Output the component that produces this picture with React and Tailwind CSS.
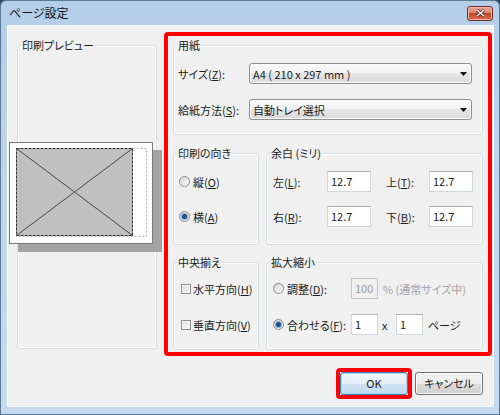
import React from "react";

function Radio({ checked }) {
  return (
    <span className="w-[11px] h-[11px] shrink-0 rounded-full border border-[#8a8a8a] bg-linear-to-br from-[#d6d6d6] to-[#fbfbfb] flex items-center justify-center">
      {checked && (
        <span className="w-[5px] h-[5px] rounded-full bg-[#23508c] shadow-[0_0_0_1px_#8fb0d6]" />
      )}
    </span>
  );
}

function Check() {
  return (
    <span className="w-[10px] h-[10px] shrink-0 border border-[#8e8f8f] bg-linear-to-br from-[#dcdcdc] to-[#f8f8f8] shadow-[inset_0_0_0_1px_#f4f4f4]" />
  );
}

function Group({ label, className, children }) {
  return (
    <div
      className={
        "relative border border-[#d5dfe5] rounded-[3px] shadow-[inset_0_0_0_1px_#ffffff] " +
        className
      }
    >
      <span className="absolute left-[3px] -top-[8px] px-[1px] leading-[14px] bg-[#f0f0f0] text-[#1b1b1b]">
        {label}
      </span>
      {children}
    </div>
  );
}

function Select({ children }) {
  return (
    <div className="flex items-center justify-between w-[223px] h-[21px] border border-[#8e8f8f] rounded-[3px] bg-[linear-gradient(#fbfbfb,#f1f1f1_50%,#e6e6e6_50%,#dadada)] pl-[3px] pr-[4px] shadow-[inset_0_0_0_1px_#fcfcfc]">
      <span className="leading-[14px]">{children}</span>
      <svg width="7" height="4" viewBox="0 0 7 4">
        <path d="M0 0H7L3.5 4Z" fill="#111" />
      </svg>
    </div>
  );
}

function Field({ w, value, disabled }) {
  return (
    <div
      className={
        "h-[21px] shrink-0 border flex items-center pl-[3px] pb-[2px] " +
        w +
        (disabled
          ? " bg-[#f0f0f0] border-[#c4c4c4] text-[#9a9a9a]"
          : " bg-white border-[#d3d6db] border-t-[#abadb3] text-[#1b1b1b]")
      }
    >
      {value}
    </div>
  );
}

export default function App() {
  return (
    <div className="w-[500px] h-[415px] overflow-hidden bg-[#2c4a63] font-['Noto_Sans_CJK_JP',sans-serif] [font-feature-settings:'palt'] text-[11px] leading-[14px] text-[#1b1b1b]">
      <div className="w-[500px] h-[415px] flex flex-col rounded-t-[6px] border border-[#5d7a98] bg-linear-to-b from-[#b4cde9] via-[#c1d6ee] to-[#c6daef]">
        {/* title bar */}
        <div className="h-[24px] shrink-0 flex items-center justify-between pl-[8px] pr-[6px]">
          <span className="text-[12px] leading-[16px] text-[#111]">ページ設定</span>
          <div className="w-[26px] h-[15px] rounded-[3px] border border-[#6e3023] bg-[linear-gradient(#eba898,#dc7f6b_50%,#c4472f_50%,#d2694f)] flex items-center justify-center shadow-[inset_0_0_0_1px_#f0b8a8]">
            <svg width="9" height="8" viewBox="0 0 9 8">
              <path d="M1 1L8 7M8 1L1 7" stroke="#5a2218" strokeWidth="3" />
              <path d="M1 1L8 7M8 1L1 7" stroke="#ffffff" strokeWidth="1.6" />
            </svg>
          </div>
        </div>

        {/* client area */}
        <div className="ml-[6px] mr-[5px] h-[382px] shrink-0 bg-[#f0f0f0] shadow-[inset_0_0_0_1px_#fafcff] flex flex-col">
          <div className="flex items-start pt-[7px] pl-[10px]">
            {/* preview */}
            <Group label="印刷プレビュー" className="mt-[13px] w-[140px] h-[304px] shrink-0">
              <svg
                className="absolute left-[-9px] top-[96px]"
                width="154"
                height="111"
                viewBox="0 0 154 111"
              >
                <rect x="9" y="8" width="144" height="102" fill="#a3a3a3" />
                <rect x="0.5" y="0.5" width="143" height="101" fill="#ffffff" stroke="#7a7a7a" />
                <rect
                  x="7.5"
                  y="6.5"
                  width="130"
                  height="88"
                  fill="none"
                  stroke="#b5b5b5"
                  strokeDasharray="2 2"
                />
                <rect
                  x="7.5"
                  y="6.5"
                  width="116"
                  height="87"
                  fill="#c0c0c0"
                  stroke="#333333"
                  strokeDasharray="3 1"
                />
                <line x1="7.5" y1="6.5" x2="123.5" y2="93.5" stroke="#4a4a4a" />
                <line x1="123.5" y1="6.5" x2="7.5" y2="93.5" stroke="#4a4a4a" />
              </svg>
            </Group>

            {/* red highlighted settings */}
            <div className="ml-[7px] w-[328px] h-[324px] shrink-0 border-4 border-[#ff0000] rounded-[4px] px-[5px] flex flex-col">
              <Group label="用紙" className="mt-[9px] h-[90px] shrink-0">
                <div className="flex flex-col gap-[15px] pt-[17px] pl-[4px]">
                  <div className="flex items-center h-[21px]">
                    <span className="w-[71px]">
                      サイズ(<u>Z</u>):
                    </span>
                    <Select>A4 ( 210 x 297 mm )</Select>
                  </div>
                  <div className="flex items-center h-[21px]">
                    <span className="w-[71px]">
                      給紙方法(<u>S</u>):
                    </span>
                    <Select>自動トレイ選択</Select>
                  </div>
                </div>
              </Group>

              <div className="mt-[18px] h-[92px] shrink-0 flex gap-[7px]">
                <Group label="印刷の向き" className="w-[86px] h-[92px] shrink-0">
                  <div className="flex flex-col gap-[14px] pt-[17px] pl-[5px]">
                    <div className="flex items-center gap-[3px] h-[21px]">
                      <Radio />
                      <span>
                        縦(<u>O</u>)
                      </span>
                    </div>
                    <div className="flex items-center gap-[3px] h-[21px]">
                      <Radio checked />
                      <span>
                        横(<u>A</u>)
                      </span>
                    </div>
                  </div>
                </Group>
                <Group label="余白 (ミリ)" className="w-[217px] h-[92px] shrink-0">
                  <div className="grid grid-cols-[54px_44px_15px_43px_44px] gap-y-[14px] items-center pt-[17px] pl-[6px]">
                    <span>
                      左(<u>L</u>):
                    </span>
                    <Field w="w-[44px]" value="12.7" />
                    <span />
                    <span>
                      上(<u>T</u>):
                    </span>
                    <Field w="w-[44px]" value="12.7" />
                    <span>
                      右(<u>R</u>):
                    </span>
                    <Field w="w-[44px]" value="12.7" />
                    <span />
                    <span>
                      下(<u>B</u>):
                    </span>
                    <Field w="w-[44px]" value="12.7" />
                  </div>
                </Group>
              </div>

              <div className="mt-[17px] h-[88px] shrink-0 flex gap-[7px]">
                <Group label="中央揃え" className="w-[86px] h-[88px] shrink-0">
                  <div className="flex flex-col gap-[15px] pt-[15px] pl-[7px]">
                    <div className="flex items-center gap-[2px] h-[21px]">
                      <Check />
                      <span>
                        水平方向(<u>H</u>)
                      </span>
                    </div>
                    <div className="flex items-center gap-[2px] h-[21px]">
                      <Check />
                      <span>
                        垂直方向(<u>V</u>)
                      </span>
                    </div>
                  </div>
                </Group>
                <Group label="拡大縮小" className="w-[217px] h-[88px] shrink-0">
                  <div className="flex flex-col gap-[15px] pt-[15px] pl-[6px]">
                    <div className="flex items-center h-[21px]">
                      <div className="w-[78px] flex items-center gap-[3px]">
                        <Radio />
                        <span>
                          調整(<u>D</u>):
                        </span>
                      </div>
                      <Field w="w-[27px]" value="100" disabled />
                      <span className="ml-[5px] text-[#a3a3a3]">% (通常サイズ中)</span>
                    </div>
                    <div className="flex items-center h-[21px]">
                      <div className="w-[78px] flex items-center gap-[3px]">
                        <Radio checked />
                        <span className="whitespace-nowrap">
                          合わせる(<u>F</u>):
                        </span>
                      </div>
                      <Field w="w-[27px]" value="1" />
                      <span className="w-[18px] pl-[4px]">x</span>
                      <Field w="w-[27px]" value="1" />
                      <span className="ml-[5px]">ページ</span>
                    </div>
                  </div>
                </Group>
              </div>
            </div>
          </div>

          {/* buttons */}
          <div className="mt-[11px] h-[32px] flex items-center justify-end pr-[11px]">
            <div className="border-4 border-[#ff0000] rounded-[4px]">
              <div className="w-[68px] h-[23px] rounded-[3px] border border-[#3c7fb1] bg-[linear-gradient(#eef6fc,#e2eef8_50%,#cfe3f3_50%,#c2dbf0)] shadow-[inset_0_0_0_1px_#a9d6f3] flex items-center justify-center">
                OK
              </div>
            </div>
            <div className="ml-[3px] w-[68px] h-[23px] rounded-[3px] border border-[#707070] bg-[linear-gradient(#f2f2f2,#ebebeb_50%,#dddddd_50%,#cfcfcf)] shadow-[inset_0_0_0_1px_#fbfbfb] flex items-center justify-center">
              キャンセル
            </div>
          </div>
        </div>
      </div>
    </div>
  );
}
